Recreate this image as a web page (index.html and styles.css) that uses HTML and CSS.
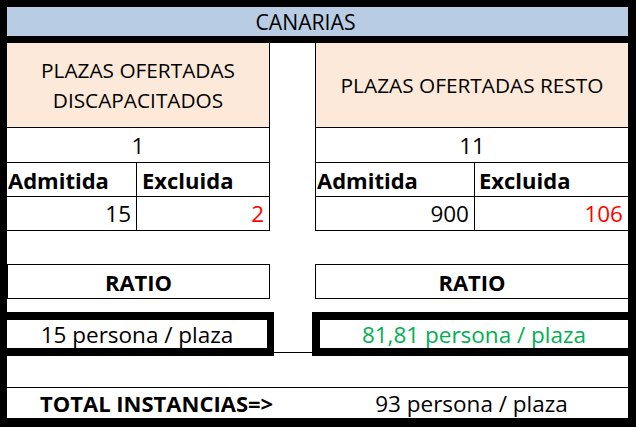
FILE: index.html
```html
<!DOCTYPE html>
<html lang="es">
<head>
<meta charset="utf-8">
<title>Canarias</title>
<link rel="stylesheet" href="styles.css">
</head>
<body>
<div class="sheet">
  <div class="title">CANARIAS</div>
  <div class="grid">
    <div class="c peach left r1 bl">PLAZAS OFERTADAS<br>DISCAPACITADOS</div>
    <div class="c peach right r1 br">PLAZAS OFERTADAS RESTO</div>

    <div class="c left r2 bl center lg">1</div>
    <div class="c right r2 br center lg">11</div>

    <div class="c ca r3 bl lab">Admitida</div>
    <div class="c cb r3 bl lab lab-b">Excluida</div>
    <div class="c cd r3 br bd lab">Admitida</div>
    <div class="c ce r3 bb lab lab-e">Excluida</div>

    <div class="c ca r4 bl num">15</div>
    <div class="c cb r4 bl num red">2</div>
    <div class="c cd r4 br bd num">900</div>
    <div class="c ce r4 bb num red">106</div>

    <div class="c left r6 box bold center">RATIO</div>
    <div class="c right r6 box box-r bold center">RATIO</div>

    <div class="c cc r8 gapline"></div>
    <div class="c left r8 thick thick-l center lg">15 persona / plaza</div>
    <div class="c right r8 thick thick-r center lg green">81,81 persona / plaza</div>

    <div class="c tot-l r10 bold">TOTAL INSTANCIAS=&gt;</div>
    <div class="c right r10 tot-r center lg">93 persona / plaza</div>
  </div>
</div>
</body>
</html>
```
FILE: styles.css
```css
html, body {
  margin: 0;
  padding: 0;
  background: #fff;
}
body {
  width: 636px;
  height: 427px;
  overflow: hidden;
  font-family: "Open Sans", Lato, sans-serif;
  font-size: 20.8px;
  color: #000;
}
.sheet {
  box-sizing: border-box;
  width: 636px;
  height: 427px;
  border-style: solid;
  border-color: #000;
  border-width: 7px 8px 9px 7px;
  display: flex;
  flex-direction: column;
}
.title {
  height: 29px;
  flex: none;
  background: #b8cce4;
  border-bottom: 7px solid #000;
  display: flex;
  align-items: center;
  justify-content: center;
  padding-right: 24px;
  font-size: 21.2px;
}
.grid {
  display: grid;
  grid-template-columns: 130px 133px 45px 160px 153px;
  grid-template-rows: 85px 35px 34px 34px 33px 35px 13px 44px 31px 31px;
}
.c {
  box-sizing: border-box;
  display: flex;
  align-items: center;
  border: 0 solid #000;
  white-space: nowrap;
}
.left { grid-column: 1 / 3; }
.right { grid-column: 4 / 6; }
.ca { grid-column: 1; }
.cb { grid-column: 2; }
.cc { grid-column: 3; }
.cd { grid-column: 4; }
.ce { grid-column: 5; }
.tot-l { grid-column: 1 / 4; }

.r1 { grid-row: 1; }
.r2 { grid-row: 2; }
.r3 { grid-row: 3; }
.r4 { grid-row: 4; }
.r6 { grid-row: 6; }
.r8 { grid-row: 8; }
.r10 { grid-row: 10; }

.bl { border-right-width: 1px; border-bottom-width: 1px; }
.br { border-left-width: 1px; border-bottom-width: 1px; }
.bd { border-right-width: 1px; }
.bb { border-bottom-width: 1px; }

.peach {
  background: #fde9d9;
  justify-content: center;
  text-align: center;
  line-height: 30px;
}
.center { justify-content: center; text-align: center; }
.lg { font-size: 22.5px; }

.lab { font-weight: 700; font-size: 22px; padding-left: 1px; }
.lab-b { padding-left: 5px; }
.lab-e { padding-left: 4px; }
.num { justify-content: flex-end; padding-right: 5px; font-size: 22.5px; }
.red { color: #ff0000; }
.green { color: #00b050; }
.bold { font-weight: 700; font-size: 22px; }

.box { border-width: 1px; }
.box-r { border-right-width: 0; }

.gapline {
  align-self: start;
  height: 41px;
  border-bottom-width: 1px;
}
.thick {
  border-top-width: 8px;
  border-bottom-width: 8px;
  background: #fff;
}
.thick-l {
  margin-right: -4px;
  border-right-width: 7px;
}
.thick-r {
  margin-left: -3px;
  border-left-width: 8px;
}
.tot-l {
  border-top-width: 1px;
  padding-left: 33px;
}
.tot-r { border-top-width: 1px; }
```
